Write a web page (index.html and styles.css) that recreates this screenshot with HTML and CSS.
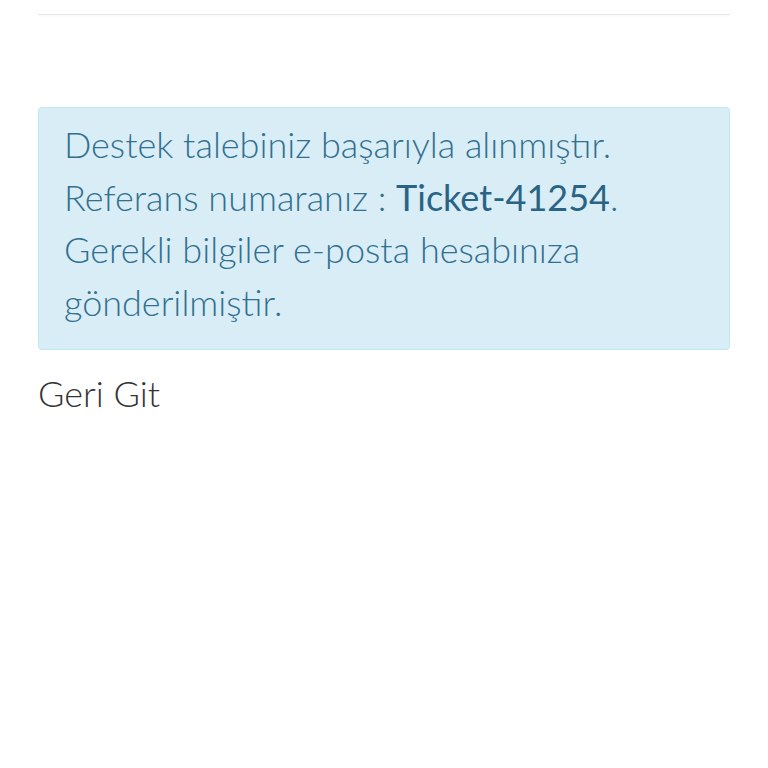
FILE: index.html
```html
<!DOCTYPE html>
<html lang="tr">
<head>
    <meta charset="UTF-8">
    <meta name="viewport" content="width=device-width, initial-scale=1.0">
    <title>Destek Talebi</title>
    <link rel="stylesheet" href="styles.css">
</head>
<body>
    <div class="container">
        <hr class="top-rule">

        <div class="alert alert-info">
            Destek talebiniz başarıyla alınmıştır.<br>
            Referans numaranız : <strong class="alert-link">Ticket-41254</strong>.<br>
            Gerekli bilgiler e-posta hesabınıza gönderilmiştir.
        </div>

        <a class="back-link" href="#">Geri Git</a>
    </div>
</body>
</html>
```

FILE: styles.css
```css
body {
    font-family: Lato, "Open Sans", sans-serif;
    font-weight: 300;
    background-color: #ffffff;
    color: #333333;
    margin: 0;
    font-size: 36px;
    line-height: 52.7px;
}

.container {
    padding: 14px 38px 0 38px;
}

.top-rule {
    border: none;
    border-top: 1px solid #e6e6e6;
    box-shadow: 0 1px 3px rgba(0, 0, 0, 0.06);
    margin: 0 0 92px 0;
}

.alert {
    padding: 10px 25px 20px 25px;
    border: 1px solid transparent;
    border-radius: 4px;
    margin-bottom: 17px;
}

.alert-info {
    background-color: #d9edf7;
    border-color: #bce8f1;
    color: #31708f;
}

.alert-link {
    font-weight: 400;
    color: #2a6485;
}

.back-link {
    color: #333333;
    text-decoration: none;
}
```
